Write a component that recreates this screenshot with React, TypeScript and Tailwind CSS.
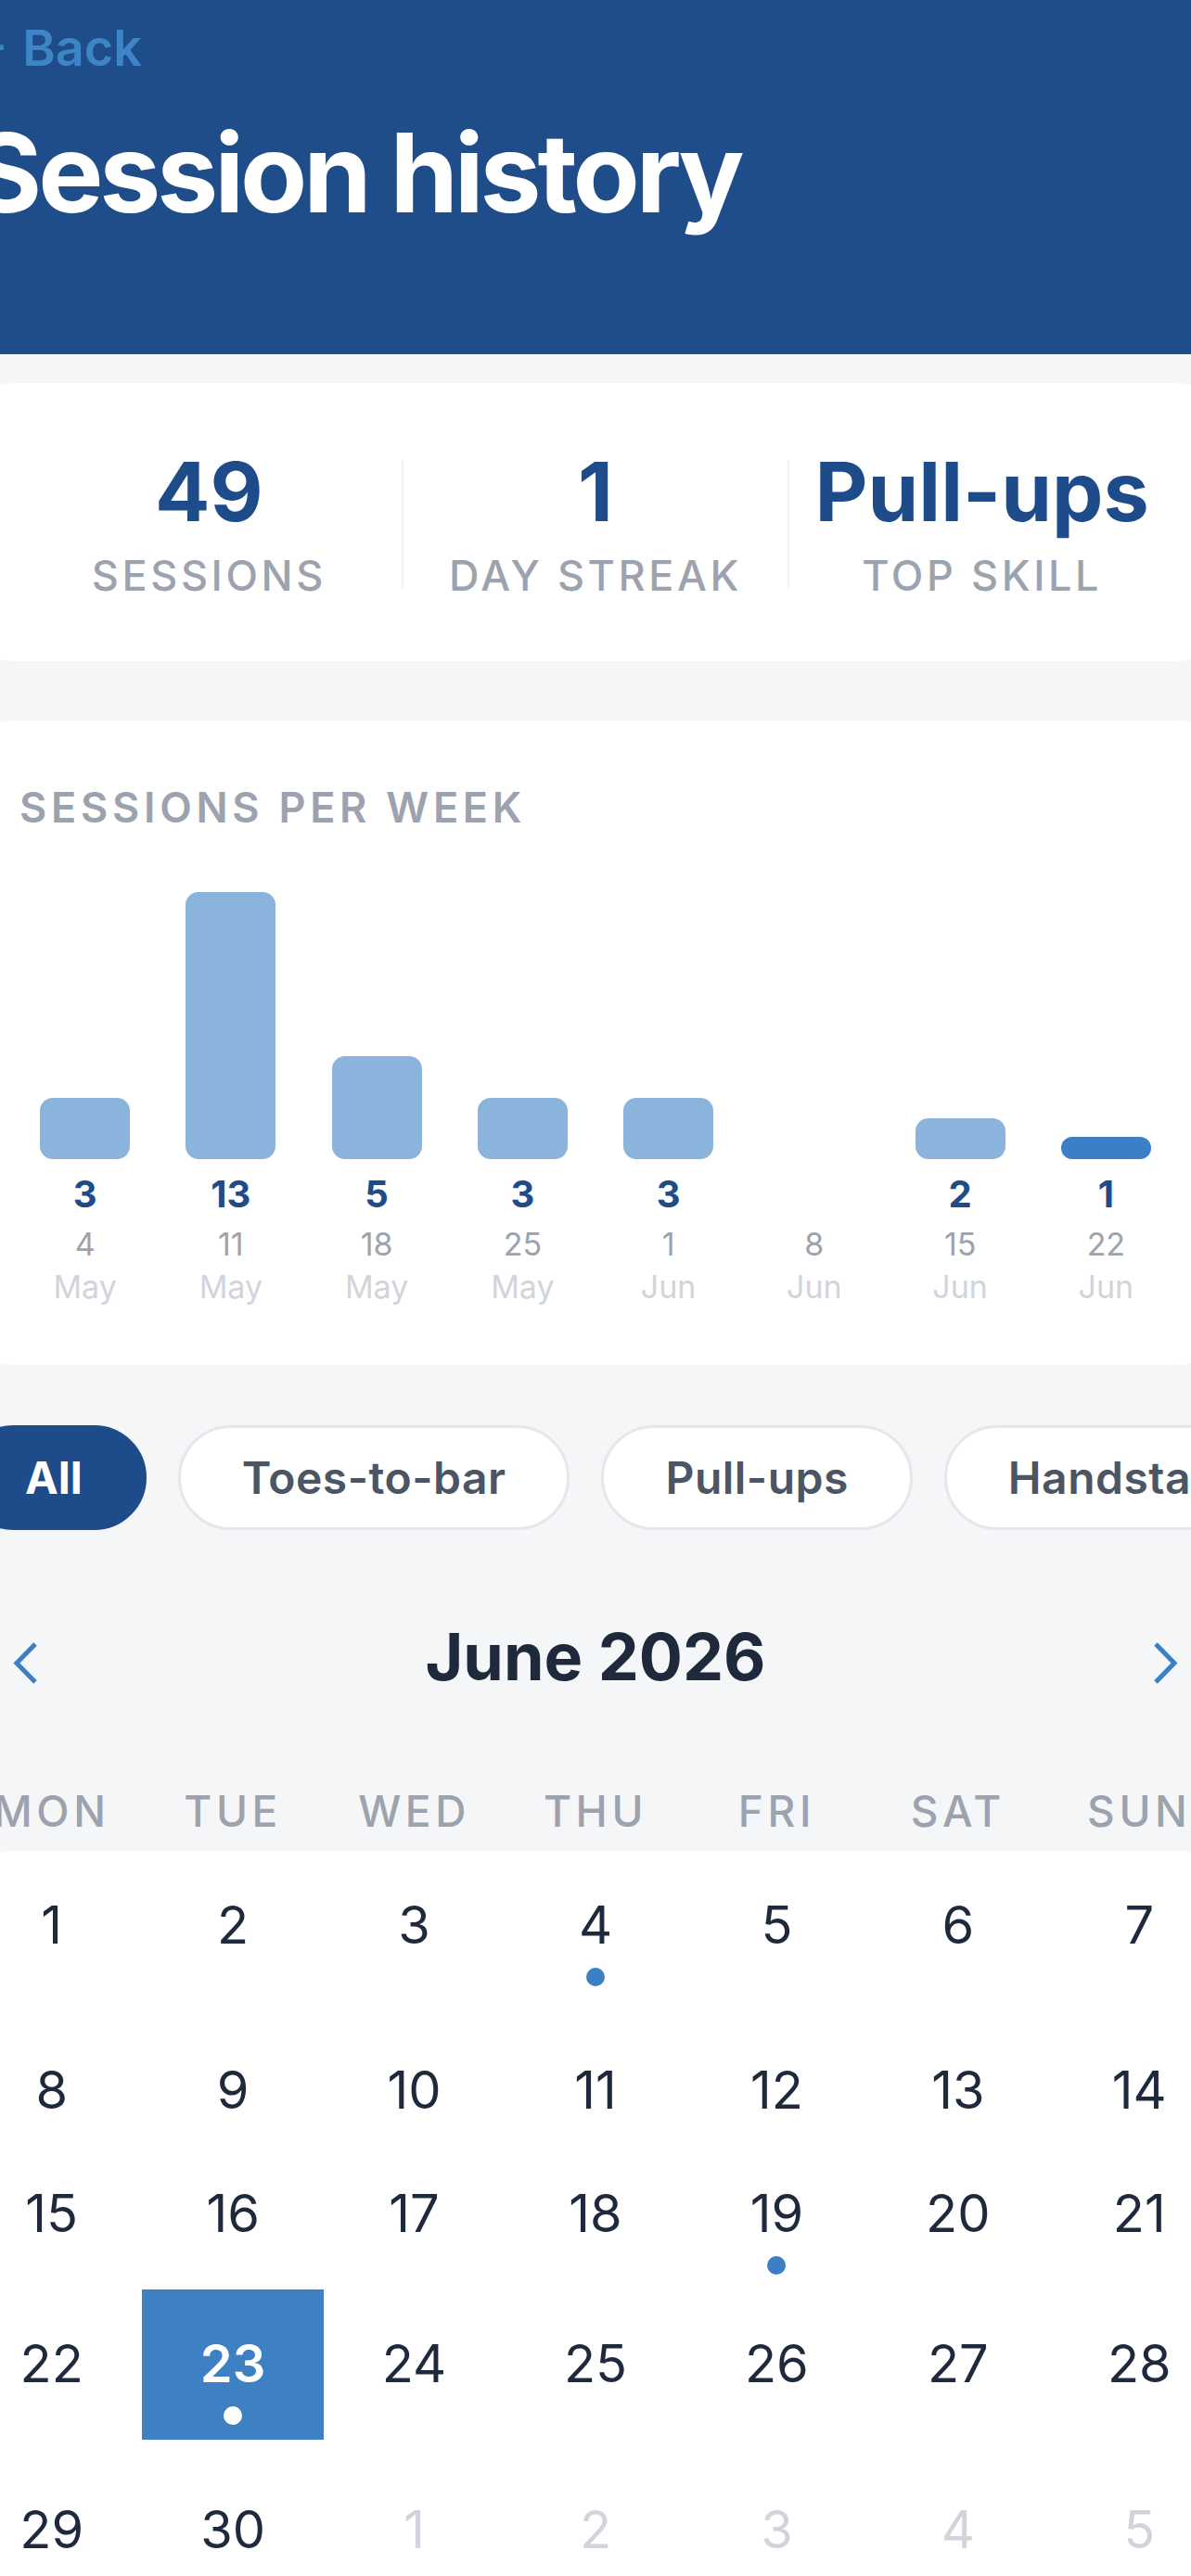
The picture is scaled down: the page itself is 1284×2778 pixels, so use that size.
import React from 'react'

interface Week {
  count: number
  day: string
  month: string
  current?: boolean
}

const weeks: Week[] = [
  { count: 3, day: '4', month: 'May' },
  { count: 13, day: '11', month: 'May' },
  { count: 5, day: '18', month: 'May' },
  { count: 3, day: '25', month: 'May' },
  { count: 3, day: '1', month: 'Jun' },
  { count: 0, day: '8', month: 'Jun' },
  { count: 2, day: '15', month: 'Jun' },
  { count: 1, day: '22', month: 'Jun', current: true },
]

const filters = ['All', 'Toes-to-bar', 'Pull-ups', 'Handstand']
const weekdays = ['MON', 'TUE', 'WED', 'THU', 'FRI', 'SAT', 'SUN']

interface Day {
  n: number
  other?: boolean
  dot?: boolean
  selected?: boolean
}

const rows: Day[][] = [
  [1, 2, 3, 4, 5, 6, 7].map((n) => ({ n, dot: n === 4 })),
  [8, 9, 10, 11, 12, 13, 14].map((n) => ({ n })),
  [15, 16, 17, 18, 19, 20, 21].map((n) => ({ n, dot: n === 19 })),
  [22, 23, 24, 25, 26, 27, 28].map((n) => ({
    n,
    dot: n === 23,
    selected: n === 23,
  })),
  [
    { n: 29 },
    { n: 30 },
    { n: 1, other: true },
    { n: 2, other: true },
    { n: 3, other: true },
    { n: 4, other: true },
    { n: 5, other: true },
  ],
]

// spacing under each calendar row
const rowGap = ['mb-[16px]', 'mb-[9px]', '', 'mb-[17px]', '']

const MAX = 13
const BAR_MAX = 288

function Chevron({ dir }: { dir: 'left' | 'right' }) {
  return (
    <svg width="27" height="45" viewBox="0 0 27 45" fill="none">
      <polyline
        points={dir === 'left' ? '24,2 4,22.5 24,43' : '3,2 23,22.5 3,43'}
        stroke="#3b7fc4"
        strokeWidth="5"
        strokeLinejoin="miter"
      />
    </svg>
  )
}

export default function App() {
  return (
    <div className="min-h-screen w-full overflow-hidden bg-[#f5f6f8] font-['Inter',sans-serif]">
      <div className="w-[1368px] ml-[-42px]">
        {/* HEADER */}
        <div className="h-[382px] bg-[#1e4d8a] pt-[25px] px-[1px]">
          <div className="text-[54px] leading-none font-semibold text-[#3d85c6]">
            ← Back
          </div>
          <h1 className="mt-[48px] ml-[9px] text-[118px] leading-none font-bold tracking-[-0.035em] text-white">
            Session history
          </h1>
        </div>

        {/* STATS */}
        <div className="mx-[8px] mt-[31px] rounded-[48px] bg-white px-[52px] pt-[73px] pb-[70px]">
          <div className="flex items-center">
            {[
              ['49', 'SESSIONS'],
              ['1', 'DAY STREAK'],
              ['Pull-ups', 'TOP SKILL'],
            ].map(([value, label], i) => (
              <React.Fragment key={label}>
                {i > 0 && <div className="h-[138px] w-[2px] bg-[#f0f1f3]" />}
                <div className="flex-1 flex flex-col items-center">
                  <div className="text-[88px] leading-none font-bold text-[#1e4b8a]">
                    {value}
                  </div>
                  <div className="mt-[24px] text-[45px] leading-none font-medium tracking-[0.08em] text-[#9ca3af]">
                    {label}
                  </div>
                </div>
              </React.Fragment>
            ))}
          </div>
        </div>

        {/* CHART */}
        <div className="mx-[8px] mt-[64px] rounded-[48px] bg-white px-[47px] pt-[71px] pb-[67px]">
          <div className="ml-[8px] text-[45px] leading-none font-semibold tracking-[0.105em] text-[#9ca3af]">
            SESSIONS PER WEEK
          </div>
          <div className="mt-[69px] grid grid-cols-8">
            {weeks.map((w) => (
              <div key={w.day + w.month} className="flex flex-col items-center">
                <div className="h-[288px] w-full flex items-end justify-center">
                  {w.count > 0 && (
                    <div
                      className={
                        w.current
                          ? 'w-[97px] rounded-[14px] bg-[#3b7fc4]'
                          : 'w-[97px] rounded-[14px] bg-[#8bb4dc]'
                      }
                      style={{
                        height: Math.max(24, (w.count / MAX) * BAR_MAX),
                      }}
                    />
                  )}
                </div>
                <div className="mt-[18px] h-[40px] text-[40px] leading-none font-bold text-[#1e4b8a]">
                  {w.count > 0 ? w.count : ''}
                </div>
                <div className="mt-[17px] text-[34px] leading-none text-[#9ca3af]">
                  {w.day}
                </div>
                <div className="mt-[12px] text-[34px] leading-none text-[#d1d5db]">
                  {w.month}
                </div>
              </div>
            ))}
          </div>
        </div>

        {/* FILTERS */}
        <div className="mt-[65px] flex gap-[34px] overflow-hidden">
          {filters.map((f, i) => (
            <div
              key={f}
              className={
                i === 0
                  ? 'h-[113px] shrink-0 flex items-center rounded-full border-[3px] border-[#1e4b8a] bg-[#1e4b8a] px-[66px] text-[48px] leading-none font-bold text-white'
                  : 'h-[113px] shrink-0 flex items-center rounded-full border-[3px] border-[#e5e7eb] bg-white px-[66px] text-[48px] leading-none font-semibold tracking-[0.01em] text-[#4b5563]'
              }
            >
              {f}
            </div>
          ))}
        </div>

        {/* MONTH NAV */}
        <div className="mt-[102px] flex items-center justify-between px-[56px]">
          <div className="mt-[12px]">
            <Chevron dir="left" />
          </div>
          <div className="text-[70px] leading-none font-bold text-[#1e293b]">
            June 2026
          </div>
          <div className="mt-[12px]">
            <Chevron dir="right" />
          </div>
        </div>

        {/* WEEKDAYS */}
        <div className="mt-[108px] grid grid-cols-7">
          {weekdays.map((d) => (
            <div
              key={d}
              className="text-center text-[46px] leading-none font-medium tracking-[0.1em] text-[#9ca3af]"
            >
              {d}
            </div>
          ))}
        </div>

        {/* CALENDAR */}
        <div className="mx-[8px] mt-[20px] rounded-t-[48px] bg-white pb-[80px]">
          <div className="mx-[-8px]">
            {rows.map((row, r) => (
              <div key={r} className={'grid grid-cols-7 ' + rowGap[r]}>
                {row.map((d, i) => (
                  <div
                    key={i}
                    className={
                      d.selected
                        ? 'flex flex-col items-center pt-[52px] pb-[16px] bg-[#3d80c3]'
                        : 'flex flex-col items-center pt-[52px] pb-[16px]'
                    }
                  >
                    <div
                      className={
                        d.selected
                          ? 'text-[56px] leading-none font-semibold text-white'
                          : d.other
                          ? 'text-[56px] leading-none text-[#d1d5db]'
                          : 'text-[56px] leading-none text-[#1e293b]'
                      }
                    >
                      {d.n}
                    </div>
                    {d.dot && (
                      <div
                        className={
                          d.selected
                            ? 'mt-[18px] h-[20px] w-[20px] rounded-full bg-white'
                            : 'mt-[18px] h-[20px] w-[20px] rounded-full bg-[#3b7fc4]'
                        }
                      />
                    )}
                  </div>
                ))}
              </div>
            ))}
          </div>
        </div>
      </div>
    </div>
  )
}
